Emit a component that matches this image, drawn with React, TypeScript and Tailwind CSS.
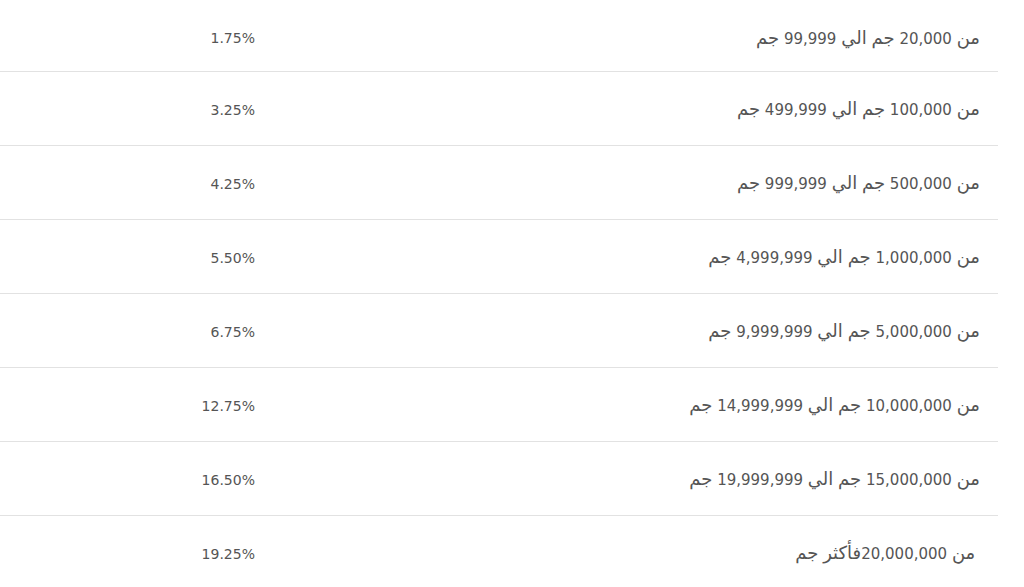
import React from 'react';

type Tier = {
  range: string;
  rate: string;
};

const tiers: Tier[] = [
  { range: 'من 20,000 جم الي 99,999 جم', rate: '1.75%' },
  { range: 'من 100,000 جم الي 499,999 جم', rate: '3.25%' },
  { range: 'من 500,000 جم الي 999,999 جم', rate: '4.25%' },
  { range: 'من 1,000,000 جم الي 4,999,999 جم', rate: '5.50%' },
  { range: 'من 5,000,000 جم الي 9,999,999 جم', rate: '6.75%' },
  { range: 'من 10,000,000 جم الي 14,999,999 جم', rate: '12.75%' },
  { range: 'من 15,000,000 جم الي 19,999,999 جم', rate: '16.50%' },
  { range: '\u00A0من 20,000,000فأكثر جم', rate: '19.25%' },
];

// arabic words a bit larger so they sit like the kufi face in the design
const RangeText: React.FC<{ text: string }> = ({ text }) => (
  <>
    {text.split(/([\u0600-\u06FF]+)/).map((part, i) =>
      /[\u0600-\u06FF]/.test(part) ? (
        <span key={i} className="text-[18px]">
          {part}
        </span>
      ) : (
        <React.Fragment key={i}>{part}</React.Fragment>
      ),
    )}
  </>
);

const App: React.FC = () => {
  return (
    <div
      dir="rtl"
      className="w-[1024px] h-[587px] overflow-hidden bg-white leading-[22px] text-[#555555]"
      style={{ fontFamily: '"DejaVu Sans", sans-serif' }}
    >
      <div className="w-[998px] ml-auto mr-[26px]">
        {tiers.map((t, idx) => (
          <div
            key={t.rate}
            className={
              idx === 0
                ? 'flex items-center h-[72px] pt-[5px] border-b border-[#e2e2e2]'
                : idx === tiers.length - 1
                  ? 'flex items-center h-[74px] pt-[1px]'
                  : 'flex items-center h-[74px] pt-[2px] border-b border-[#e2e2e2]'
            }
          >
            <div className="flex-1 pr-[18px] text-right text-[15px]">
              <RangeText text={t.range} />
            </div>
            <div className="w-[270px] pr-[15px] text-right text-[14px]">{t.rate}</div>
          </div>
        ))}
      </div>
    </div>
  );
};

export default App;
